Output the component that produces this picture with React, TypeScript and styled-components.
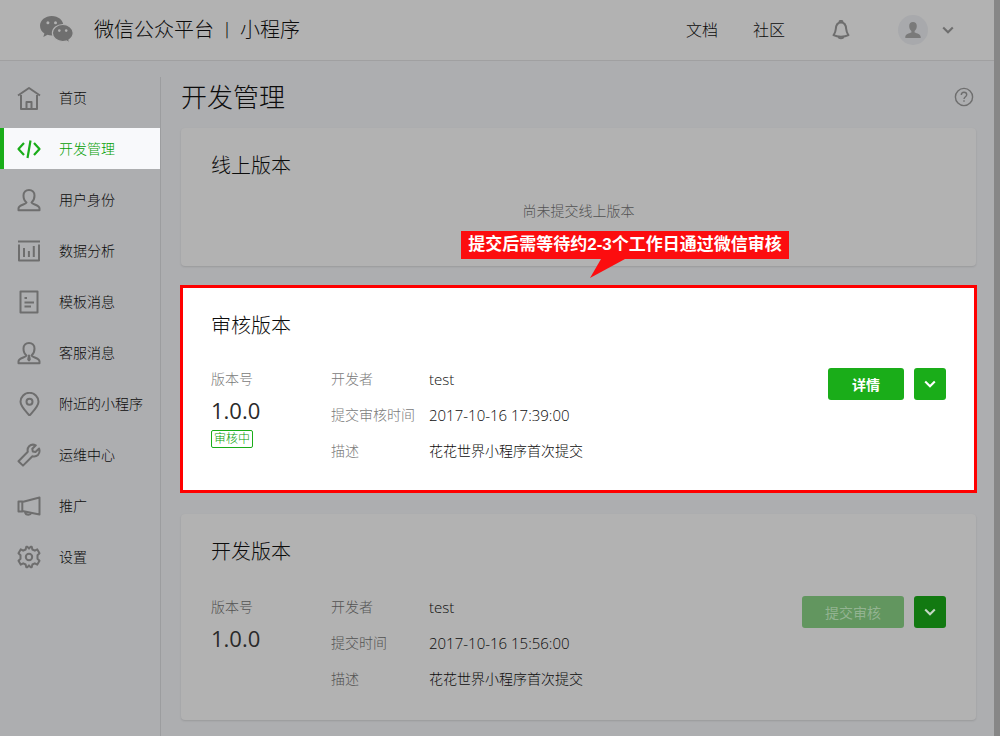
import React from "react";
import styled, { createGlobalStyle, css } from "styled-components";

const c = {
  page: "#adaeb0",
  panel: "#b2b2b2",
  line: "#9c9d9f",
  text: "#0c0c0c",
  muted: "#525252",
  mutedBright: "#7a7a7a",
  icon: "#6e6e6e",
  green: "#1aad19",
  greenText: "#05a004",
  greenDim: "#127911",
  greenOff: "#62965f",
  red: "#ff0000",
};

const GlobalStyle = createGlobalStyle`
  * { box-sizing: border-box; }
  body {
    margin: 0;
    background: ${c.page};
    color: ${c.text};
    font: 14px/22px "Open Sans", "Noto Sans CJK SC", sans-serif;
    font-weight: 300;
  }
  h1, h2, dl, dd, dt, ul, p { margin: 0; padding: 0; font-weight: 300; }
  a { color: inherit; text-decoration: none; }
  button { font-family: inherit; border: 0; padding: 0; cursor: pointer; }
  svg { display: block; }
`;

const Page = styled.div`
  min-height: 100vh;
  display: flex;
  flex-direction: column;
  border-right: 6px solid #878787;
  overflow: hidden;
`;

const Header = styled.header`
  height: 61px;
  display: flex;
  align-items: center;
  padding: 0 40px;
  background: ${c.panel};
  border-bottom: 1px solid #a0a0a1;
`;

const Brand = styled.a`
  display: flex;
  align-items: center;
  gap: 20px;
  font-size: 20px;
  line-height: 28px;
`;

const Separator = styled.span`
  display: inline-block;
  width: 26px;
  text-align: center;
  font-size: 18px;
`;

const HeaderNav = styled.nav`
  margin-left: auto;
  display: flex;
  align-items: center;
  font-size: 16px;
`;

const NavLink = styled.a`
  margin-right: 35px;
`;

const IconButton = styled.button<{ $gap?: number }>`
  background: none;
  color: ${c.icon};
  margin-left: ${(p) => p.$gap ?? 0}px;
`;

const Account = styled(IconButton)`
  display: flex;
  align-items: center;
  gap: 14px;
`;

const Avatar = styled.span`
  width: 30px;
  height: 30px;
  border-radius: 50%;
  background: #a8a9ac;
  display: flex;
  align-items: center;
  justify-content: center;
`;

const Body = styled.div`
  flex: 1;
  display: flex;
`;

const Sidebar = styled.nav`
  flex: 0 0 161px;
  margin-top: 16px;
  border-right: 1px solid ${c.line};
`;

const Menu = styled.ul`
  list-style: none;
  display: flex;
  flex-direction: column;
  gap: 10px;
`;

const MenuLink = styled.a<{ $active?: boolean }>`
  height: 41px;
  display: flex;
  align-items: center;
  gap: 18px;
  padding-left: 13px;
  border-left: 4px solid transparent;
  svg { color: ${c.icon}; }
  ${(p) =>
    p.$active &&
    css`
      background: #f8f9fb;
      border-color: ${c.green};
      color: ${c.greenText};
      svg { color: ${c.green}; }
    `}
`;

const Main = styled.main`
  flex: 1;
  min-width: 0;
  padding: 18px 18px 16px 20px;
`;

const TitleRow = styled.div`
  display: flex;
  align-items: center;
  justify-content: space-between;
  padding-right: 2px;
  margin-bottom: 13px;
`;

const PageTitle = styled.h1`
  font-size: 26px;
  line-height: 36px;
`;

const Cards = styled.div`
  display: flex;
  flex-direction: column;
  gap: 20px;
`;

const Card = styled.section<{ $highlight?: boolean }>`
  position: relative;
  display: flex;
  flex-direction: column;
  gap: 30px;
  padding: 24px 30px 30px;
  border-radius: 4px;
  background: ${c.panel};
  box-shadow: 0 1px 2px rgba(0, 0, 0, 0.12);
  ${(p) =>
    p.$highlight &&
    css`
      gap: 28px;
      margin: -1px -1px 1px;
      padding: 24px 28px 28px;
      border: 3px solid ${c.red};
      border-radius: 0;
      background: #fff;
      box-shadow: none;
    `}
`;

const CardTitle = styled.h2`
  font-size: 20px;
  line-height: 28px;
`;

const Empty = styled.p`
  min-height: 26px;
  margin-top: -10px;
  margin-bottom: 10px;
  text-align: center;
  color: ${c.muted};
`;

const CardBody = styled.div`
  display: flex;
  align-items: flex-start;
`;

const Version = styled.div<{ $dim?: boolean }>`
  width: 120px;
  color: ${(p) => (p.$dim ? c.muted : c.mutedBright)};
`;

const VersionNumber = styled.div`
  margin: 2px 0;
  font-size: 22px;
  line-height: 36px;
  font-weight: 400;
  color: #2a2a2a;
`;

const Status = styled.span`
  display: block;
  width: max-content;
  padding: 0 2px;
  border: 1px solid ${c.green};
  border-radius: 2px;
  font-size: 12px;
  line-height: 16px;
  color: ${c.greenText};
`;

const Details = styled.dl<{ $dim?: boolean }>`
  flex: 1;
  display: grid;
  grid-template-columns: 98px 1fr;
  row-gap: 14px;
  dt { color: ${(p) => (p.$dim ? c.muted : c.mutedBright)}; }
`;

const Value = styled.dd<{ $latin?: boolean }>`
  ${(p) =>
    p.$latin &&
    css`
      font-size: 15px;
      font-weight: 300;
    `}
`;

const Actions = styled.div`
  display: flex;
  gap: 10px;
`;

const Button = styled.button<{ $tone: string }>`
  height: 32px;
  min-width: 32px;
  display: flex;
  align-items: center;
  justify-content: center;
  border-radius: 3px;
  background: ${(p) => p.$tone};
  color: ${(p) => (p.$tone === c.greenDim ? "#c4d8c4" : "#fff")};
`;

const TextButton = styled(Button)<{ $bold?: boolean }>`
  padding: 0 ${(p) => (p.$bold ? 24 : 23)}px;
  font-size: 14px;
  font-weight: ${(p) => (p.$bold ? 700 : 400)};
  &:disabled { color: #93b391; cursor: default; }
`;

const Callout = styled.div`
  position: absolute;
  left: 278px;
  bottom: 100%;
  margin-bottom: 29px;
  width: 328px;
  background: #fc0d0f;
  color: #fff;
  font: 700 17px/28px "Liberation Sans", "Noto Sans CJK SC", sans-serif;
  text-align: center;
  white-space: nowrap;
  svg { position: absolute; left: 128px; top: 100%; }
`;

const shapes: Record<string, React.ReactNode> = {
  home: (
    <>
      <path d="M1 9.500 12 2l11 7.500" />
      <path d="M4 9v14h16V9" />
      <path d="M9.500 23v-7h5v7" />
    </>
  ),
  code: <path d="M7 6 1.500 12 7 18M17 6l5.500 6L17 18M13.500 3.500 10.500 21" strokeWidth="2.200" />,
  user: (
    <path d="M9.500 14.500C7.500 13 6.500 10.500 6.500 7.500 6.500 4.200 8.800 2 12 2s5.500 2.200 5.500 5.500c0 3-1 5.500-3 7 .5 2 8 2.500 8 6v1.800h-21v-1.800c0-3.500 7.500-4 8-6z" />
  ),
  chart: (
    <>
      <path d="M1 2.500h22M2 5.500v16h20v-16" />
      <path d="M7 9v9M11.900 12v6M16.800 7v11" />
    </>
  ),
  note: (
    <>
      <rect x="3.500" y="1.500" width="17" height="21" />
      <path d="M7.500 8h2.500M7.500 12.500h9.500M7.500 16.500h6.500" />
    </>
  ),
  service: (
    <>
      <path d="M9.500 14.500C7.500 13 6.500 10.500 6.500 7.500 6.500 4.200 8.800 2 12 2s5.500 2.200 5.500 5.500c0 3-1 5.500-3 7 .5 2 8 2.500 8 6v1.800h-21v-1.800c0-3.500 7.500-4 8-6z" />
      <path d="M12 14.500 11.200 18.500 12 19.500l.8-1z" />
    </>
  ),
  pin: (
    <>
      <path d="M12.500 23.500C9 19.500 3.500 14.500 3.500 9.800a9 9 0 0 1 18 0c0 4.700-5.500 9.700-9 13.700z" />
      <circle cx="12.500" cy="9.800" r="3" />
    </>
  ),
  wrench: (
    <path d="M18.800 2.300 15.300 5.800l.5 2.700 2.700.5 3.600-3.500c1 3 .3 5-1.200 6.500-1.500 1.400-3.300 1.700-5.500 1.200L6 22.600 1.500 18.200l9.300-9.400c-.5-2.200-.1-4 1.300-5.500 1.600-1.600 4-2.200 6.700-1z" />
  ),
  horn: (
    <>
      <path d="M1.500 7.500h3.800v10H1.500zM5.300 8 22.500 3.500v17L5.300 17" />
      <path d="M8 18c.3 1.800 1.700 2.700 3.500 2.700 1.300 0 2.300-.4 2.800-1.500" />
    </>
  ),
  gear: (
    <>
      <circle cx="12" cy="12" r="3.200" />
      <path d="M9.300 1.800 8.600 4.500 6.200 5.700 3.700 4.400 1.500 8.300 3.500 10.300v3.400l-2 2 2.200 3.900 2.500-1.300 2.400 1.200.7 2.700h1.200l1.500-1.800 1.500 1.800h1.200l.7-2.700 2.400-1.200 2.500 1.300 2.200-3.900-2-2v-3.400l2-2-2.200-3.900-2.500 1.300-2.400-1.200-.7-2.700h-1.200L12 3.600l-1.500-1.800z" />
    </>
  ),
};

const MenuIcon = ({ name }: { name: string }) => (
  <svg
    width="24"
    height="24"
    viewBox="0 0 24 24"
    fill="none"
    stroke="currentColor"
    strokeWidth="2"
    strokeLinejoin="round"
    aria-hidden="true"
  >
    {shapes[name]}
  </svg>
);

const Chevron = () => (
  <svg width="12" height="8" viewBox="0 0 12 8" fill="none" stroke="currentColor" strokeWidth="2.100" aria-hidden="true">
    <path d="M1.200 1.500 6 6.200l4.800-4.700" />
  </svg>
);

const Logo = () => (
  <svg width="34" height="30" viewBox="0 0 34 30" aria-hidden="true">
    <path fill="#6f6f6f" d="M11.800 1C5.300 1 0 5.300 0 10.800c0 3.200 1.700 5.900 4.400 7.700L3.300 22l4.200-2.200c1.300.4 2.800.6 4.300.6 6.500 0 11.600-4.200 11.600-9.600S18.300 1 11.800 1z" />
    <path fill="#6f6f6f" stroke={c.panel} strokeWidth="1.200" d="M22.800 9.500c-5.800 0-10.400 3.700-10.400 8.500s4.600 8.500 10.400 8.500c1.200 0 2.400-.2 3.500-.5l3.600 2-1-3.100c2.600-1.600 4.300-4 4.300-6.900 0-4.800-4.600-8.500-10.400-8.500z" />
    <g fill={c.panel}>
      <circle cx="7.900" cy="7.700" r="1.500" />
      <circle cx="15.500" cy="7.700" r="1.500" />
      <circle cx="19.300" cy="15.600" r="1.300" />
      <circle cx="26.200" cy="15.600" r="1.300" />
    </g>
  </svg>
);

const menu = [
  ["home", "首页"],
  ["code", "开发管理"],
  ["user", "用户身份"],
  ["chart", "数据分析"],
  ["note", "模板消息"],
  ["service", "客服消息"],
  ["pin", "附近的小程序"],
  ["wrench", "运维中心"],
  ["horn", "推广"],
  ["gear", "设置"],
];

const DetailList = ({ rows, dim }: { rows: string[][]; dim?: boolean }) => (
  <Details $dim={dim}>
    {rows.map(([label, value]) => (
      <React.Fragment key={label}>
        <dt>{label}</dt>
        <Value $latin={/^[\x20-\x7e]+$/.test(value)}>{value}</Value>
      </React.Fragment>
    ))}
  </Details>
);

export default function App() {
  return (
    <>
      <GlobalStyle />
      <Page>
        <Header>
          <Brand href="#">
            <Logo />
            <span>
              微信公众平台<Separator>丨</Separator>小程序
            </span>
          </Brand>
          <HeaderNav>
            <NavLink href="#docs">文档</NavLink>
            <NavLink href="#community">社区</NavLink>
            <IconButton $gap={12} aria-label="通知">
              <svg width="18" height="20" viewBox="0 0 18 20" fill="none" stroke="currentColor" strokeWidth="2" strokeLinejoin="round">
                <path d="M9 2.500C5.500 2.500 4 5.500 3.800 9 3.600 12 2.500 13.500 1.500 15.200c2 1 4.500 1.500 7.500 1.500s5.500-.5 7.500-1.500c-1-1.700-2.100-3.200-2.300-6.200C14 5.500 12.500 2.500 9 2.500z" />
                <path d="M7.500 2.300a1.500 1.500 0 0 1 3 0M6.500 17c.5 1.800 4.500 1.800 5 0" />
              </svg>
            </IconButton>
            <Account $gap={48} aria-label="账号">
              <Avatar>
                <svg width="16" height="16" viewBox="0 0 16 16" fill="#7a7a7a">
                  <path d="M8 0C5.700 0 4.200 1.600 4.200 4c0 2.200.9 4 2.200 5v1.500C4 11.500.3 12 .3 15v1h15.400v-1c0-3-3.700-3.500-6.100-4.500V9c1.300-1 2.200-2.800 2.200-5C11.800 1.600 10.300 0 8 0z" />
                </svg>
              </Avatar>
              <Chevron />
            </Account>
          </HeaderNav>
        </Header>
        <Body>
          <Sidebar>
            <Menu>
              {menu.map(([icon, label]) => (
                <li key={icon}>
                  <MenuLink href={`#${icon}`} $active={icon === "code"}>
                    <MenuIcon name={icon} />
                    {label}
                  </MenuLink>
                </li>
              ))}
            </Menu>
          </Sidebar>
          <Main>
            <TitleRow>
              <PageTitle>开发管理</PageTitle>
              <IconButton aria-label="帮助">
                <svg width="20" height="20" viewBox="0 0 20 20" fill="none" stroke="currentColor" strokeWidth="1.400">
                  <circle cx="10" cy="10" r="8.600" />
                  <path d="M7.300 8c0-1.700 1.100-2.800 2.700-2.800s2.700 1 2.700 2.500c0 2-2.700 2-2.700 4.300M10 13.300v1.500" />
                </svg>
              </IconButton>
            </TitleRow>
            <Cards>
              <Card>
                <CardTitle>线上版本</CardTitle>
                <Empty>尚未提交线上版本</Empty>
              </Card>
              <Card $highlight>
                <Callout role="note">
                  提交后需等待约2-3个工作日通过微信审核
                  <svg width="36" height="19" viewBox="0 0 36 19" fill="#fc0d0f" aria-hidden="true">
                    <path d="M12 0h24L1 19z" />
                  </svg>
                </Callout>
                <CardTitle>审核版本</CardTitle>
                <CardBody>
                  <Version>
                    版本号
                    <VersionNumber>1.0.0</VersionNumber>
                    <Status>审核中</Status>
                  </Version>
                  <DetailList
                    rows={[
                      ["开发者", "test"],
                      ["提交审核时间", "2017-10-16 17:39:00"],
                      ["描述", "花花世界小程序首次提交"],
                    ]}
                  />
                  <Actions>
                    <TextButton $tone={c.green} $bold>详情</TextButton>
                    <Button $tone={c.green} aria-label="更多操作">
                      <Chevron />
                    </Button>
                  </Actions>
                </CardBody>
              </Card>
              <Card>
                <CardTitle>开发版本</CardTitle>
                <CardBody>
                  <Version $dim>
                    版本号
                    <VersionNumber>1.0.0</VersionNumber>
                  </Version>
                  <DetailList
                    dim
                    rows={[
                      ["开发者", "test"],
                      ["提交时间", "2017-10-16 15:56:00"],
                      ["描述", "花花世界小程序首次提交"],
                    ]}
                  />
                  <Actions>
                    <TextButton $tone={c.greenOff} disabled>提交审核</TextButton>
                    <Button $tone={c.greenDim} aria-label="更多操作">
                      <Chevron />
                    </Button>
                  </Actions>
                </CardBody>
              </Card>
            </Cards>
          </Main>
        </Body>
      </Page>
    </>
  );
}
